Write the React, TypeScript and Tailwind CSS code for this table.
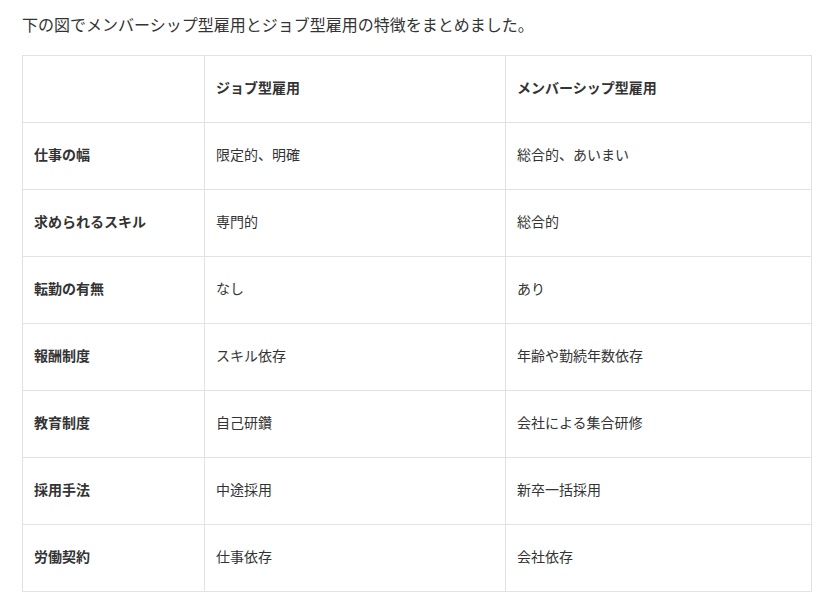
import React from "react";

const rows: [string, string, string][] = [
  ["仕事の幅", "限定的、明確", "総合的、あいまい"],
  ["求められるスキル", "専門的", "総合的"],
  ["転勤の有無", "なし", "あり"],
  ["報酬制度", "スキル依存", "年齢や勤続年数依存"],
  ["教育制度", "自己研鑽", "会社による集合研修"],
  ["採用手法", "中途採用", "新卒一括採用"],
  ["労働契約", "仕事依存", "会社依存"],
];

export default function App() {
  return (
    <div className="bg-white min-h-[612px] px-[22px] pt-[12px] text-[#333] font-['Noto_Sans_CJK_JP','Noto_Sans',sans-serif]">
      <p className="text-[16px] leading-[24px] mb-[19px]">
        下の図でメンバーシップ型雇用とジョブ型雇用の特徴をまとめました。
      </p>
      <table className="w-[789px] border-collapse table-fixed text-[14px]">
        <colgroup>
          <col className="w-[182px]" />
          <col className="w-[301px]" />
          <col className="w-[306px]" />
        </colgroup>
        <thead>
          <tr className="h-[67px]">
            <th className="border border-[#dfe3e6]" />
            <th className="border border-[#dfe3e6] text-left font-bold px-[11px] pb-[4px]">ジョブ型雇用</th>
            <th className="border border-[#dfe3e6] text-left font-bold px-[11px] pb-[4px]">メンバーシップ型雇用</th>
          </tr>
        </thead>
        <tbody>
          {rows.map(([a, b, c]) => (
            <tr key={a} className="h-[67px]">
              <td className="border border-[#dfe3e6] font-bold px-[11px] pb-[4px]">{a}</td>
              <td className="border border-[#dfe3e6] px-[11px] pb-[4px]">{b}</td>
              <td className="border border-[#dfe3e6] px-[11px] pb-[4px]">{c}</td>
            </tr>
          ))}
        </tbody>
      </table>
    </div>
  );
}
